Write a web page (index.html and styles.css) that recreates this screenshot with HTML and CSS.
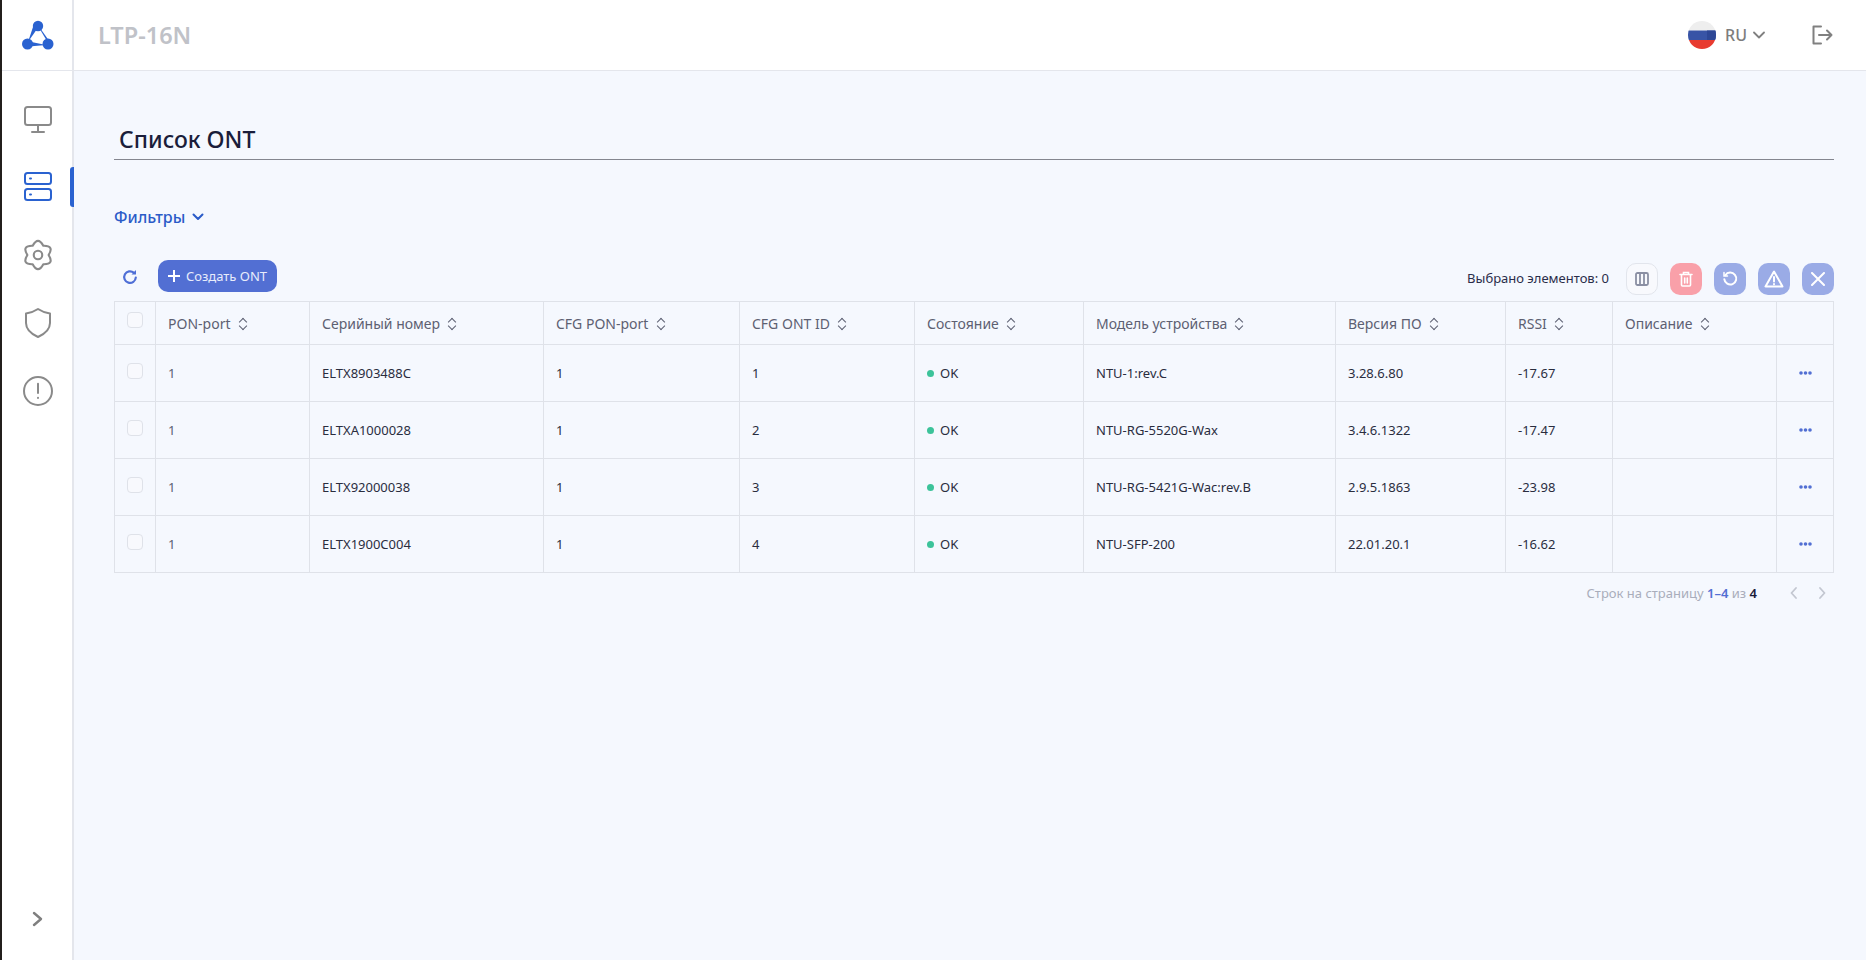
FILE: index.html
```html
<!DOCTYPE html>
<html lang="ru">
<head>
    <meta charset="UTF-8">
    <meta name="viewport" content="width=device-width, initial-scale=1.0">
    <title>Список ONT</title>
    <link rel="stylesheet" href="styles.css">
</head>
<body>
    <div class="app">
        <aside class="sidebar">
            <div class="logo">
                <svg width="32" height="30" viewBox="0 0 32 30" fill="#2a62d0">
                    <path d="M15 9L6 22 12 4z"/>
                    <path d="M7 21.500v5L24 25z"/>
                    <path d="M26.500 20l-1 2L17.500 8.500 18 8z"/>
                    <circle cx="16" cy="6" r="5.200"/>
                    <circle cx="5.500" cy="24" r="5.500"/>
                    <circle cx="26" cy="24" r="5.500"/>
                </svg>
            </div>
            <nav class="nav">
                <a class="nav-item">
                    <svg width="32" height="32" viewBox="0 0 32 32" fill="none" stroke="#8a8a8a" stroke-width="2" stroke-linejoin="round" stroke-linecap="round">
                        <rect x="3" y="4" width="26" height="18" rx="2.500"/>
                        <path d="M16 22v6M10 29h12"/>
                    </svg>
                </a>
                <a class="nav-item active">
                    <svg width="32" height="32" viewBox="0 0 32 32" fill="none" stroke="#2a62d0" stroke-width="2" stroke-linecap="round">
                        <rect x="3" y="2" width="26" height="11" rx="2.500"/>
                        <rect x="3" y="18" width="26" height="11" rx="2.500"/>
                        <path d="M8 7.500h1M8 23.500h1"/>
                    </svg>
                </a>
                <a class="nav-item">
                    <svg width="34" height="34" viewBox="0 0 32 32" fill="none" stroke="#8a8a8a" stroke-width="2" stroke-linejoin="round">
                        <path d="M11 7.340Q16-2 21 7.340Q31.590 7 26 16Q31.590 25 21 24.660Q16 34 11 24.660Q.41 25 6 16Q.41 7 11 7.340z"/>
                        <circle cx="16" cy="16" r="4"/>
                    </svg>
                </a>
                <a class="nav-item">
                    <svg width="32" height="32" viewBox="0 0 24 24" fill="none" stroke="#8a8a8a" stroke-width="1.500" stroke-linejoin="round">
                        <path d="M12 1.500c3 2 6 3 9 3.300v7.200c0 4.500-3.500 8-9 10.500-5.500-2.500-9-6-9-10.500V4.800c3-.3 6-1.300 9-3.300z"/>
                    </svg>
                </a>
                <a class="nav-item">
                    <svg width="32" height="32" viewBox="0 0 24 24" fill="none" stroke="#8a8a8a" stroke-width="1.500" stroke-linecap="round">
                        <circle cx="12" cy="12" r="10.500"/>
                        <path d="M12 6.500v7M12 17v.3"/>
                    </svg>
                </a>
            </nav>
            <div class="sidebar-foot">
                <svg width="12" height="16" viewBox="0 0 12 16" fill="none" stroke="#7f7f7f" stroke-width="2.400" stroke-linecap="round" stroke-linejoin="round">
                    <path d="M2 2l7 6-7 6"/>
                </svg>
            </div>
        </aside>
        <div class="main">
            <header class="topbar">
                <div class="device">LTP-16N</div>
                <div class="lang">
                    <svg class="flag" width="28" height="28" viewBox="0 0 28 28">
                        <defs><clipPath id="flag-circle"><circle cx="14" cy="14" r="14"/></clipPath></defs>
                        <g clip-path="url(#flag-circle)">
                            <rect width="28" height="9.500" fill="#eeeeee"/>
                            <rect y="9.500" width="28" height="9.500" fill="#3854a6"/>
                            <rect y="19" width="28" height="9" fill="#e83b30"/>
                            <rect x="19" y="9.500" width="9" height="9.500" fill="#2d4796"/>
                        </g>
                    </svg>
                    <span>RU</span>
                    <svg class="lang-arrow" width="12" height="8" viewBox="0 0 12 8" fill="none" stroke="#808080" stroke-width="1.800" stroke-linecap="round" stroke-linejoin="round">
                        <path d="M1 1.500l5 5 5-5"/>
                    </svg>
                </div>
                <svg class="logout" width="22" height="20" viewBox="0 0 22 20" fill="none" stroke="#808080" stroke-width="2" stroke-linecap="round" stroke-linejoin="round">
                    <path d="M10 1.500H2.500v17H10M8 10h12.500M16 5.500l4.500 4.500-4.500 4.500"/>
                </svg>
            </header>
            <main class="content">
                <h1 class="title"><span>Список ONT</span></h1>
                <div class="filters">
                    <span>Фильтры</span>
                    <svg width="12" height="8" viewBox="0 0 12 8" fill="none" stroke="#2a5bc8" stroke-width="2" stroke-linecap="round" stroke-linejoin="round">
                        <path d="M1.500 1.500L6 6l4.500-4.500"/>
                    </svg>
                </div>
                <div class="toolbar">
                    <svg class="refresh" width="16" height="16" viewBox="0 0 16 16" fill="none" stroke="#4f6fd6" stroke-width="2.200" stroke-linecap="round">
                        <path d="M13.800 8.500a5.800 5.800 0 1 1-2-4.800"/>
                        <path d="M14 1v4.500H9.500Z" stroke="none" fill="#4f6fd6"/>
                    </svg>
                    <button class="btn-create">
                        <svg width="12" height="12" viewBox="0 0 12 12" stroke="#fff" stroke-width="2"><path d="M6 0v12M0 6h12"/></svg>
                        Создать ONT
                    </button>
                    <div class="selected">Выбрано элементов: 0</div>
                    <button class="icon-btn btn-columns">
                        <svg width="14" height="14" viewBox="0 0 14 14" fill="none" stroke="#8a8fa3" stroke-width="1.800"><rect x="1" y="1" width="12" height="12" rx="1.500"/><path d="M5 1v12M9 1v12"/></svg>
                    </button>
                    <button class="icon-btn btn-delete">
                        <svg width="14" height="16" viewBox="0 0 14 16" fill="none" stroke="#fff" stroke-width="1.600" stroke-linecap="round"><path d="M1 3.500h12M4.500 3.500V1.500h5v2M2.500 3.500v10.500a1 1 0 0 0 1 1h7a1 1 0 0 0 1-1V3.500M5.700 7v5M8.300 7v5"/></svg>
                    </button>
                    <button class="icon-btn btn-blue">
                        <svg width="16" height="16" viewBox="0 0 16 16" fill="none" stroke="#fff" stroke-width="2" stroke-linecap="round"><path d="M3.300 4.200a6 6 0 1 1-1 4"/><path d="M2 1.500v3.500h3.500" stroke-width="1.500"/></svg>
                    </button>
                    <button class="icon-btn btn-blue">
                        <svg width="20" height="18" viewBox="0 0 20 18" fill="none" stroke="#fff" stroke-width="2" stroke-linejoin="round" stroke-linecap="round"><path d="M10 1.500L1.500 16.500h17zM10 7v4.500M10 14v.2"/></svg>
                    </button>
                    <button class="icon-btn btn-blue">
                        <svg width="14" height="14" viewBox="0 0 14 14" stroke="#fff" stroke-width="2" stroke-linecap="round"><path d="M1 1l12 12M13 1L1 13"/></svg>
                    </button>
                </div>
                <table class="ont-table">
                    <thead>
                        <tr>
                            <th><span class="check"></span></th>
                            <th>PON-port <span class="sort"></span></th>
                            <th>Серийный номер <span class="sort"></span></th>
                            <th>CFG PON-port <span class="sort"></span></th>
                            <th>CFG ONT ID <span class="sort"></span></th>
                            <th>Состояние <span class="sort"></span></th>
                            <th>Модель устройства <span class="sort"></span></th>
                            <th>Версия ПО <span class="sort"></span></th>
                            <th>RSSI <span class="sort"></span></th>
                            <th>Описание <span class="sort"></span></th>
                            <th></th>
                        </tr>
                    </thead>
                    <tbody>
                        <tr>
                            <td><span class="check"></span></td>
                            <td class="muted">1</td>
                            <td>ELTX8903488C</td>
                            <td>1</td>
                            <td>1</td>
                            <td><span class="dot"></span>OK</td>
                            <td>NTU-1:rev.C</td>
                            <td>3.28.6.80</td>
                            <td>-17.67</td>
                            <td></td>
                            <td class="more"><svg width="13" height="4" viewBox="0 0 13 4" fill="#526fd3"><circle cx="2" cy="2" r="1.800"/><circle cx="6.500" cy="2" r="1.800"/><circle cx="11" cy="2" r="1.800"/></svg></td>
                        </tr>
                        <tr>
                            <td><span class="check"></span></td>
                            <td class="muted">1</td>
                            <td>ELTXA1000028</td>
                            <td>1</td>
                            <td>2</td>
                            <td><span class="dot"></span>OK</td>
                            <td>NTU-RG-5520G-Wax</td>
                            <td>3.4.6.1322</td>
                            <td>-17.47</td>
                            <td></td>
                            <td class="more"><svg width="13" height="4" viewBox="0 0 13 4" fill="#526fd3"><circle cx="2" cy="2" r="1.800"/><circle cx="6.500" cy="2" r="1.800"/><circle cx="11" cy="2" r="1.800"/></svg></td>
                        </tr>
                        <tr>
                            <td><span class="check"></span></td>
                            <td class="muted">1</td>
                            <td>ELTX92000038</td>
                            <td>1</td>
                            <td>3</td>
                            <td><span class="dot"></span>OK</td>
                            <td>NTU-RG-5421G-Wac:rev.B</td>
                            <td>2.9.5.1863</td>
                            <td>-23.98</td>
                            <td></td>
                            <td class="more"><svg width="13" height="4" viewBox="0 0 13 4" fill="#526fd3"><circle cx="2" cy="2" r="1.800"/><circle cx="6.500" cy="2" r="1.800"/><circle cx="11" cy="2" r="1.800"/></svg></td>
                        </tr>
                        <tr>
                            <td><span class="check"></span></td>
                            <td class="muted">1</td>
                            <td>ELTX1900C004</td>
                            <td>1</td>
                            <td>4</td>
                            <td><span class="dot"></span>OK</td>
                            <td>NTU-SFP-200</td>
                            <td>22.01.20.1</td>
                            <td>-16.62</td>
                            <td></td>
                            <td class="more"><svg width="13" height="4" viewBox="0 0 13 4" fill="#526fd3"><circle cx="2" cy="2" r="1.800"/><circle cx="6.500" cy="2" r="1.800"/><circle cx="11" cy="2" r="1.800"/></svg></td>
                        </tr>
                    </tbody>
                </table>
                <div class="pager">
                    <span>Строк на страницу <b class="range">1–4</b> из <b class="total">4</b></span>
                    <svg class="pager-arrows" width="36" height="12" viewBox="0 0 36 12" fill="none" stroke="#c3c7d1" stroke-width="1.800" stroke-linecap="round" stroke-linejoin="round">
                        <path d="M6 1L1.500 6 6 11M30 1l4.500 5-4.500 5"/>
                    </svg>
                </div>
            </main>
        </div>
    </div>
</body>
</html>
```

FILE: styles.css
```css
* {
    box-sizing: border-box;
}
body {
    margin: 0;
    height: 960px;
    overflow: hidden;
    border-left: 2px solid #231f1c;
    font-family: "Noto Sans", Arial, sans-serif;
    background-color: #f5f8fe;
    color: #2a2d3e;
}
.app {
    display: flex;
    height: 100%;
}
.sidebar {
    width: 72px;
    flex: none;
    display: flex;
    flex-direction: column;
    background-color: #fff;
    border-right: 2px solid #e4e6ec;
}
.logo {
    height: 71px;
    flex: none;
    display: flex;
    justify-content: center;
    align-items: center;
    border-bottom: 1px solid #e4e6ec;
    padding-left: 2px;
}
.nav {
    display: flex;
    flex-direction: column;
    padding-top: 14px;
}
.nav-item {
    position: relative;
    height: 68px;
    display: flex;
    justify-content: center;
    align-items: center;
    padding-left: 2px;
}
.nav-item.active::after {
    content: "";
    position: absolute;
    right: -2px;
    top: 14px;
    width: 4px;
    height: 40px;
    border-radius: 3px 0 0 3px;
    background-color: #2a62d0;
}
.sidebar-foot {
    margin-top: auto;
    height: 81px;
    display: flex;
    justify-content: center;
    padding-top: 32px;
    padding-left: 2px;
}
.main {
    flex: 1;
    min-width: 0;
    display: flex;
    flex-direction: column;
}
.topbar {
    height: 71px;
    flex: none;
    display: flex;
    align-items: center;
    background-color: #fff;
    border-bottom: 1px solid #e4e6ec;
    padding: 0 33px 0 24px;
}
.device {
    font-size: 23.500px;
    font-weight: 600;
    color: #c0c2c8;
}
.lang {
    margin-left: auto;
    display: flex;
    align-items: center;
    gap: 9px;
    font-size: 16px;
    font-weight: 500;
    color: #7d7d7d;
}
.lang-arrow {
    margin-left: -3px;
}
.logout {
    margin-left: 46px;
}
.content {
    flex: 1;
    padding: 0 32px 0 40px;
}
.title {
    margin: 47px 0 0;
    height: 42px;
    padding-left: 5px;
    border-bottom: 1px solid #84868f;
    font-size: 23px;
    font-weight: 500;
    line-height: 42px;
    color: #1a1d3a;
}
.filters {
    margin-top: 44px;
    height: 26px;
    display: flex;
    align-items: center;
    gap: 7px;
    font-size: 16px;
    font-weight: 500;
    color: #2a5bc8;
}
.toolbar {
    margin-top: 30px;
    height: 41px;
    display: flex;
    align-items: flex-start;
}
.refresh {
    margin: 9px 0 0 8px;
}
.btn-create {
    margin-left: 20px;
    width: 119px;
    height: 32px;
    display: flex;
    align-items: center;
    justify-content: center;
    gap: 6px;
    border: none;
    border-radius: 10px;
    padding: 0;
    background-color: #526fd3;
    font-family: inherit;
    font-size: 13px;
    color: #e8ecfb;
}
.selected {
    margin: 9px 0 0 auto;
    font-size: 13px;
    color: #2a2d4a;
}
.icon-btn {
    margin: 3px 0 0 12px;
    width: 32px;
    height: 32px;
    display: flex;
    align-items: center;
    justify-content: center;
    border: none;
    border-radius: 10px;
    padding: 0;
}
.btn-columns {
    margin-left: 17px;
    background-color: #f8f9fd;
    border: 1px solid #e2e5ec;
}
.btn-delete {
    background-color: #f9a0a9;
}
.btn-blue {
    background-color: #9aabe6;
}
.ont-table {
    width: 1720px;
    border-collapse: collapse;
    table-layout: fixed;
    font-size: 13px;
}
.ont-table th,
.ont-table td {
    border: 1px solid #dfe2e9;
    padding: 0 12px;
    text-align: left;
    white-space: nowrap;
}
.ont-table th {
    height: 43px;
    font-size: 14px;
    font-weight: 400;
    color: #5d6072;
}
.ont-table td {
    height: 57px;
}
.ont-table th:nth-child(1) { width: 41px; }
.ont-table th:nth-child(2) { width: 154px; }
.ont-table th:nth-child(3) { width: 234px; }
.ont-table th:nth-child(4) { width: 196px; }
.ont-table th:nth-child(5) { width: 175px; }
.ont-table th:nth-child(6) { width: 169px; }
.ont-table th:nth-child(7) { width: 252px; }
.ont-table th:nth-child(8) { width: 170px; }
.ont-table th:nth-child(9) { width: 107px; }
.ont-table th:nth-child(10) { width: 164px; }
.check {
    display: block;
    width: 16px;
    height: 16px;
    margin-top: -6px;
    border: 1px solid #dfe2e9;
    border-radius: 4px;
    background-color: #f8f9fd;
}
.ont-table td .check {
    margin-top: -5px;
}
.sort {
    display: inline-block;
    position: relative;
    width: 10px;
    height: 14px;
    margin-left: 3px;
    vertical-align: -2px;
}
.sort::before,
.sort::after {
    content: "";
    position: absolute;
    left: 2.500px;
    width: 5px;
    height: 5px;
    border: solid #5d6072;
    border-width: 1.800px 0 0 1.800px;
}
.sort::before {
    top: 2px;
    transform: rotate(45deg);
}
.sort::after {
    bottom: 2px;
    transform: rotate(225deg);
}
.muted {
    color: #5d6072;
}
.dot {
    display: inline-block;
    width: 7px;
    height: 7px;
    margin-right: 6px;
    border-radius: 50%;
    background-color: #3cc39a;
    vertical-align: 1px;
}
.ont-table td.more {
    padding: 0 0 6px;
    text-align: center;
}
.pager {
    margin-top: 8px;
    height: 24px;
    display: flex;
    align-items: center;
    justify-content: flex-end;
    gap: 33px;
    padding-right: 8px;
    font-size: 13px;
    color: #a9adbb;
}
.range {
    font-weight: 600;
    color: #526fd3;
}
.total {
    font-weight: 600;
    color: #1a1d3a;
}
```
